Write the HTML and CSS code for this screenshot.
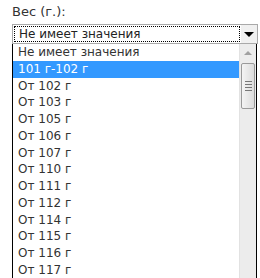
FILE: index.html
```html
<!DOCTYPE html>
<html lang="ru">
<head>
  <meta charset="UTF-8" />
  <title>Вес</title>
  <link rel="stylesheet" href="styles.css">
</head>
<body>
  <div class="field">
    <div class="label">Вес (г.):</div>
    <div class="select">
      <div class="select-value">Не имеет значения</div>
      <div class="select-btn"><span class="arrow-down"></span></div>
    </div>
    <div class="list">
      <ul class="options">
        <li>Не имеет значения</li>
        <li class="active">101 г-102 г</li>
        <li>От 102 г</li>
        <li>От 103 г</li>
        <li>От 105 г</li>
        <li>От 106 г</li>
        <li>От 107 г</li>
        <li>От 110 г</li>
        <li>От 111 г</li>
        <li>От 112 г</li>
        <li>От 114 г</li>
        <li>От 115 г</li>
        <li>От 116 г</li>
        <li>От 117 г</li>
      </ul>
      <div class="scrollbar">
        <div class="scroll-up"><span class="arrow-up"></span></div>
        <div class="thumb">
          <span class="grip"></span>
          <span class="grip"></span>
          <span class="grip"></span>
          <span class="grip"></span>
        </div>
      </div>
    </div>
  </div>
</body>
</html>
```

FILE: styles.css
```css
body {
  margin: 0;
  font-family: "DejaVu Sans", Verdana, sans-serif;
  font-size: 12px;
  color: #333;
  background: #fff;
  overflow: hidden;
}

.field {
  padding: 4px 0 0 12px;
  width: 246px;
}

.label {
  height: 20px;
  line-height: 16px;
  font-size: 13px;
  color: #333;
}

.select {
  display: flex;
  height: 20px;
  box-sizing: border-box;
  border: 1px solid #a9a9a9;
  background: #fff;
}

.select-value {
  flex: 1;
  margin: 1px;
  padding-left: 4px;
  line-height: 14px;
  border: 1px dotted #000;
  color: #222;
  white-space: nowrap;
  overflow: hidden;
}

.select-btn {
  width: 16px;
  display: flex;
  align-items: center;
  justify-content: center;
  background: #f0f0f0;
}

.arrow-down {
  width: 0;
  height: 0;
  border-left: 5px solid transparent;
  border-right: 5px solid transparent;
  border-top: 5px solid #000;
}

.list {
  display: flex;
  width: 245px;
  height: 240px;
  box-sizing: border-box;
  border: 1px solid #000;
  border-top: none;
  overflow: hidden;
}

.options {
  flex: 1;
  list-style: none;
  margin: 0;
  padding: 0;
}

.options li {
  height: 16.75px;
  line-height: 16.75px;
  padding-left: 5px;
  white-space: nowrap;
  color: #333;
}

.options li.active {
  background: #3399ff;
  color: #fff;
}

.scrollbar {
  width: 16px;
  background: #ececec;
  border-left: 1px solid #e2e2e2;
}

.scroll-up {
  height: 17px;
  display: flex;
  align-items: center;
  justify-content: center;
}

.arrow-up {
  width: 0;
  height: 0;
  border-left: 4px solid transparent;
  border-right: 4px solid transparent;
  border-bottom: 4px solid #a0a0a0;
}

.thumb {
  height: 46px;
  margin: 2px 1px 0;
  box-sizing: border-box;
  border: 1px solid #9a9a9a;
  border-radius: 2px;
  background: linear-gradient(to right, #f4f4f4, #dcdcdc);
  display: flex;
  flex-direction: column;
  align-items: center;
  justify-content: center;
  gap: 2px;
}

.grip {
  width: 7px;
  height: 1px;
  background: #777;
}
```
